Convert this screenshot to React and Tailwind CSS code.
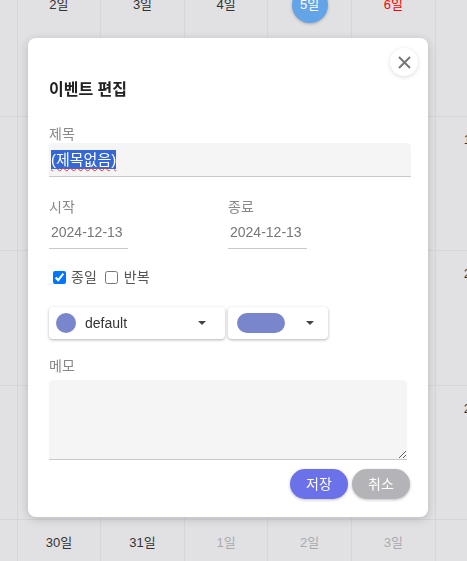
import React from "react";

const font = {fontFamily: '"Liberation Sans", "Noto Sans CJK KR", sans-serif'};

// month grid rows, only the first and last carry visible labels
const weeks = [
  ["1일", "2일", "3일", "4일", "5일", "6일", "7일"],
  ["8일", "9일", "10일", "11일", "12일", "13일", "14일"],
  ["15일", "16일", "17일", "18일", "19일", "20일", "21일"],
  ["22일", "23일", "24일", "25일", "26일", "27일", "28일"],
  ["29일", "30일", "31일", "1일", "2일", "3일", "4일"],
]

const DayLabel = ({week, day, label}) => {
  if (week === 0 && day === 4) {
    return (
      <span className="flex h-9 w-9 items-center justify-center rounded-full bg-[#63a4e8] text-white shadow-[0_1px_3px_rgba(0,0,0,0.25)]">
        {label}
      </span>
    )
  }
  const color = week === 0 && day === 5
    ? "text-[#f00]"
    : week === 4 && day >= 3 ? "text-[#aaaaae]" : "text-[#333]"
  return <span className={`flex h-9 items-center ${color}`}>{label}</span>
}

const Calendar = () => (
  <div className="h-[561px] overflow-hidden bg-[#e1e1e4]">
    <div className="-mt-[18px] -ml-[66px] w-[586px]">
      {weeks.map((week, w) => (
        <div key={w} className="grid h-[134.5px] grid-cols-[repeat(7,83.6px)] border-b border-[#d6d6da]">
          {week.map((label, d) => (
            <div key={d} className="flex justify-center border-r border-[#d6d6da] pt-[5px] text-[13px]">
              <DayLabel week={w} day={d} label={label}/>
            </div>
          ))}
        </div>
      ))}
    </div>
  </div>
)

const Caret = ({className}) => (
  <svg width="8" height="4" viewBox="0 0 8 4" className={className}>
    <path d="M0 0 L8 0 L4 4 Z" fill="#444"/>
  </svg>
)

const DateField = ({label, value}) => (
  <div className="flex flex-col">
    <span className="h-[17px] text-[14px] leading-[17px] text-[#888]">{label}</span>
    <div className="flex h-[33px] w-[79px] items-center border-b border-[#c8c8c8] pl-[2px] text-[14px] text-[#777]">
      {value}
    </div>
  </div>
)

const EditDialog = () => (
  <div className="fixed inset-0">
    <div className="relative ml-[28px] mt-[38px] h-[479px] w-[400px] rounded-lg bg-white pl-[21px] pr-[17px] pt-[40px] shadow-[0_2px_10px_rgba(0,0,0,0.18)]">

      {/* close */}
      <button type="button"
              className="absolute right-[10px] top-[10px] flex h-7 w-7 items-center justify-center rounded-full bg-white shadow-[0_1px_4px_rgba(0,0,0,0.15)]">
        <svg width="13" height="13" viewBox="0 0 13 13">
          <path d="M1 1 L12 12 M12 1 L1 12" stroke="#777" strokeWidth="2"/>
        </svg>
      </button>

      <h2 className="h-6 text-[16px] font-bold leading-6 text-[#222]">이벤트 편집</h2>

      {/* title */}
      <div className="mt-[24px] h-[17px] text-[14px] leading-[17px] text-[#888]">제목</div>
      <div className="flex h-[34px] items-center rounded-t border-b border-[#c8c8c8] bg-[#f5f5f5] pl-[2px] text-[15px]">
        <span className="bg-[#3568d4] leading-[19px] text-white underline decoration-[#e33] decoration-wavy decoration-1 underline-offset-2">
          (제목없음)
        </span>
      </div>

      {/* dates */}
      <div className="mt-[22px] grid grid-cols-[179px_1fr]">
        <DateField label="시작" value="2024-12-13"/>
        <DateField label="종료" value="2024-12-13"/>
      </div>

      <div className="mt-[18px] flex h-5 items-center text-[14px] text-[#555]">
        <input type="checkbox" defaultChecked className="ml-[4px] h-[13px] w-[13px]"/>
        <span className="ml-[5px]">종일</span>
        <input type="checkbox" className="ml-[8px] h-[13px] w-[13px]"/>
        <span className="ml-[6px]">반복</span>
      </div>

      {/* colour selects */}
      <div className="mt-[20px] flex gap-[3px]">
        <div className="flex h-8 w-[176px] items-center rounded bg-white pl-[7px] shadow-[0_1px_3px_rgba(0,0,0,0.3)]">
          <span className="h-5 w-5 rounded-full bg-[#7986cb]"/>
          <span className="ml-[9px] flex-1 text-[14px] text-[#333]">default</span>
          <Caret className="mr-[19px]"/>
        </div>
        <div className="flex h-8 w-[100px] items-center rounded bg-white pl-[9px] shadow-[0_1px_3px_rgba(0,0,0,0.3)]">
          <span className="h-5 w-12 rounded-full bg-[#7986cb]"/>
          <span className="flex-1"/>
          <Caret className="mr-[14px]"/>
        </div>
      </div>

      {/* memo */}
      <div className="mt-[19px] h-[17px] text-[14px] leading-[17px] text-[#888]">메모</div>
      <textarea className="mt-[5px] block h-[80px] w-[358px] rounded-t border-b border-[#c8c8c8] bg-[#f5f5f5] outline-none"/>

      <div className="mt-[9px] flex justify-end gap-[4px] pr-[1px]">
        <button type="button"
                className="h-[30px] w-[58px] rounded-full bg-[#6a71e9] text-[14px] text-white shadow-[0_1px_3px_rgba(0,0,0,0.25)]">
          저장
        </button>
        <button type="button"
                className="h-[30px] w-[58px] rounded-full bg-[#b4b4b8] text-[14px] text-white shadow-[0_1px_3px_rgba(0,0,0,0.25)]">
          취소
        </button>
      </div>
    </div>
  </div>
)

const App = () => (
  <div style={font} className="relative h-[561px] w-[467px] overflow-hidden">
    <Calendar/>
    <EditDialog/>
  </div>
)

export default App
